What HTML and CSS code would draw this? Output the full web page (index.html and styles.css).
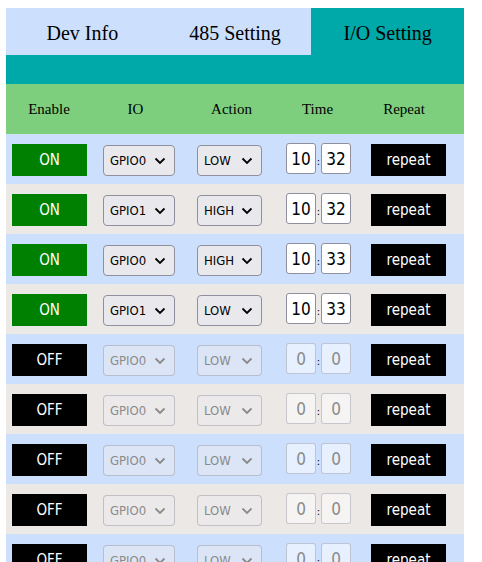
FILE: index.html
```html
<!DOCTYPE html>
<html>
<head>
<meta charset="utf-8">
<link rel="stylesheet" href="styles.css">
</head>
<body>
<div class="app">
  <div class="tabs">
    <div class="tab">Dev Info</div>
    <div class="tab">485 Setting</div>
    <div class="tab active">I/O Setting</div>
  </div>
  <div class="band"></div>
  <div class="head">
    <div>Enable</div><div>IO</div><div>Action</div><div>Time</div><div>Repeat</div>
  </div>
  <div class="rows">
    <div class="row">
      <div class="btn on">ON</div>
      <div class="sel io"><span>GPIO0</span><svg viewBox="0 0 12 8"><path d="M1.5 1.5 6 6 10.5 1.5"/></svg></div>
      <div class="sel act"><span>LOW</span><svg viewBox="0 0 12 8"><path d="M1.5 1.5 6 6 10.5 1.5"/></svg></div>
      <div class="time"><div class="num">10</div><span class="colon">:</span><div class="num">32</div></div>
      <div class="btn rep">repeat</div>
    </div>
    <div class="row">
      <div class="btn on">ON</div>
      <div class="sel io"><span>GPIO1</span><svg viewBox="0 0 12 8"><path d="M1.5 1.5 6 6 10.5 1.5"/></svg></div>
      <div class="sel act"><span>HIGH</span><svg viewBox="0 0 12 8"><path d="M1.5 1.5 6 6 10.5 1.5"/></svg></div>
      <div class="time"><div class="num">10</div><span class="colon">:</span><div class="num">32</div></div>
      <div class="btn rep">repeat</div>
    </div>
    <div class="row">
      <div class="btn on">ON</div>
      <div class="sel io"><span>GPIO0</span><svg viewBox="0 0 12 8"><path d="M1.5 1.5 6 6 10.5 1.5"/></svg></div>
      <div class="sel act"><span>HIGH</span><svg viewBox="0 0 12 8"><path d="M1.5 1.5 6 6 10.5 1.5"/></svg></div>
      <div class="time"><div class="num">10</div><span class="colon">:</span><div class="num">33</div></div>
      <div class="btn rep">repeat</div>
    </div>
    <div class="row">
      <div class="btn on">ON</div>
      <div class="sel io"><span>GPIO1</span><svg viewBox="0 0 12 8"><path d="M1.5 1.5 6 6 10.5 1.5"/></svg></div>
      <div class="sel act"><span>LOW</span><svg viewBox="0 0 12 8"><path d="M1.5 1.5 6 6 10.5 1.5"/></svg></div>
      <div class="time"><div class="num">10</div><span class="colon">:</span><div class="num">33</div></div>
      <div class="btn rep">repeat</div>
    </div>
    <div class="row off">
      <div class="btn">OFF</div>
      <div class="sel io"><span>GPIO0</span><svg viewBox="0 0 12 8"><path d="M1.5 1.5 6 6 10.5 1.5"/></svg></div>
      <div class="sel act"><span>LOW</span><svg viewBox="0 0 12 8"><path d="M1.5 1.5 6 6 10.5 1.5"/></svg></div>
      <div class="time"><div class="num">0</div><span class="colon">:</span><div class="num">0</div></div>
      <div class="btn rep">repeat</div>
    </div>
    <div class="row off">
      <div class="btn">OFF</div>
      <div class="sel io"><span>GPIO0</span><svg viewBox="0 0 12 8"><path d="M1.5 1.5 6 6 10.5 1.5"/></svg></div>
      <div class="sel act"><span>LOW</span><svg viewBox="0 0 12 8"><path d="M1.5 1.5 6 6 10.5 1.5"/></svg></div>
      <div class="time"><div class="num">0</div><span class="colon">:</span><div class="num">0</div></div>
      <div class="btn rep">repeat</div>
    </div>
    <div class="row off">
      <div class="btn">OFF</div>
      <div class="sel io"><span>GPIO0</span><svg viewBox="0 0 12 8"><path d="M1.5 1.5 6 6 10.5 1.5"/></svg></div>
      <div class="sel act"><span>LOW</span><svg viewBox="0 0 12 8"><path d="M1.5 1.5 6 6 10.5 1.5"/></svg></div>
      <div class="time"><div class="num">0</div><span class="colon">:</span><div class="num">0</div></div>
      <div class="btn rep">repeat</div>
    </div>
    <div class="row off">
      <div class="btn">OFF</div>
      <div class="sel io"><span>GPIO0</span><svg viewBox="0 0 12 8"><path d="M1.5 1.5 6 6 10.5 1.5"/></svg></div>
      <div class="sel act"><span>LOW</span><svg viewBox="0 0 12 8"><path d="M1.5 1.5 6 6 10.5 1.5"/></svg></div>
      <div class="time"><div class="num">0</div><span class="colon">:</span><div class="num">0</div></div>
      <div class="btn rep">repeat</div>
    </div>
    <div class="row off">
      <div class="btn">OFF</div>
      <div class="sel io"><span>GPIO0</span><svg viewBox="0 0 12 8"><path d="M1.5 1.5 6 6 10.5 1.5"/></svg></div>
      <div class="sel act"><span>LOW</span><svg viewBox="0 0 12 8"><path d="M1.5 1.5 6 6 10.5 1.5"/></svg></div>
      <div class="time"><div class="num">0</div><span class="colon">:</span><div class="num">0</div></div>
      <div class="btn rep">repeat</div>
    </div>
  </div>
</div>
</body>
</html>
```

FILE: styles.css
```css
html, body {
  background: #ffffff;
}
body {
  margin: 8px 0 0 6px;
  font-family: "Liberation Serif", serif;
  overflow: hidden;
}
.app {
  width: 458px;
}
.tabs {
  display: grid;
  grid-template-columns: 1fr 1fr 1fr;
  background: #cce0fd;
}
.tab {
  height: 47px;
  box-sizing: border-box;
  padding-top: 14px;
  text-align: center;
  font-size: 20px;
  line-height: 23px;
  color: #000;
}
.tab.active {
  background: #00a9a9;
}
.band {
  height: 29px;
  background: #00a9a9;
}
.head {
  display: grid;
  grid-template-columns: 86px 87px 105px 67px 106px;
  height: 50px;
  align-items: center;
  background: #7dcf7d;
  font-size: 15px;
  text-align: center;
  color: #000;
}
.rows {
  font-family: "DejaVu Sans Condensed", "DejaVu Sans", sans-serif;
}
.row {
  display: flex;
  align-items: center;
  height: 50px;
  padding-left: 6px;
  background: #cce0fd;
}
.row:nth-child(even) {
  background: #ece8e6;
}
.btn {
  width: 75px;
  height: 32px;
  display: flex;
  align-items: center;
  justify-content: center;
  background: #000;
  color: #fff;
  font-size: 15px;
  margin-top: 1px;
}
.btn.on {
  background: #008000;
}
.sel {
  height: 31px;
  box-sizing: border-box;
  display: flex;
  align-items: center;
  justify-content: space-between;
  padding: 0 8px 0 6px;
  border: 1px solid #8f8f9d;
  border-radius: 4px;
  background: #e9e9ed;
  color: #000;
  font-size: 13px;
  margin-top: 3px;
}
.sel svg {
  width: 12px;
  height: 8px;
  flex: none;
  fill: none;
  stroke: #000;
  stroke-width: 1.8;
}
.sel.io {
  width: 72px;
  margin-left: 16px;
}
.sel.act {
  width: 65px;
  margin-left: 22px;
}
.time {
  display: flex;
  align-items: center;
  margin-left: 24px;
  margin-top: -1px;
}
.num {
  width: 30px;
  height: 31px;
  box-sizing: border-box;
  border: 1px solid #8f8f9d;
  border-radius: 3px;
  background: #fff;
  display: flex;
  align-items: center;
  justify-content: center;
  font-size: 17px;
  color: #000;
}
.colon {
  width: 5px;
  text-align: center;
  font-size: 11px;
  padding-top: 6px;
  color: #000;
}
.btn.rep {
  margin-left: 20px;
}
.off .sel {
  background: rgba(233, 233, 237, 0.5);
  border-color: rgba(143, 143, 157, 0.45);
  color: #8a8a8a;
}
.off .sel svg {
  stroke: #8a8a8a;
}
.off .num {
  background: rgba(255, 255, 255, 0.5);
  border-color: rgba(143, 143, 157, 0.45);
  color: #8a8a8a;
}
```
